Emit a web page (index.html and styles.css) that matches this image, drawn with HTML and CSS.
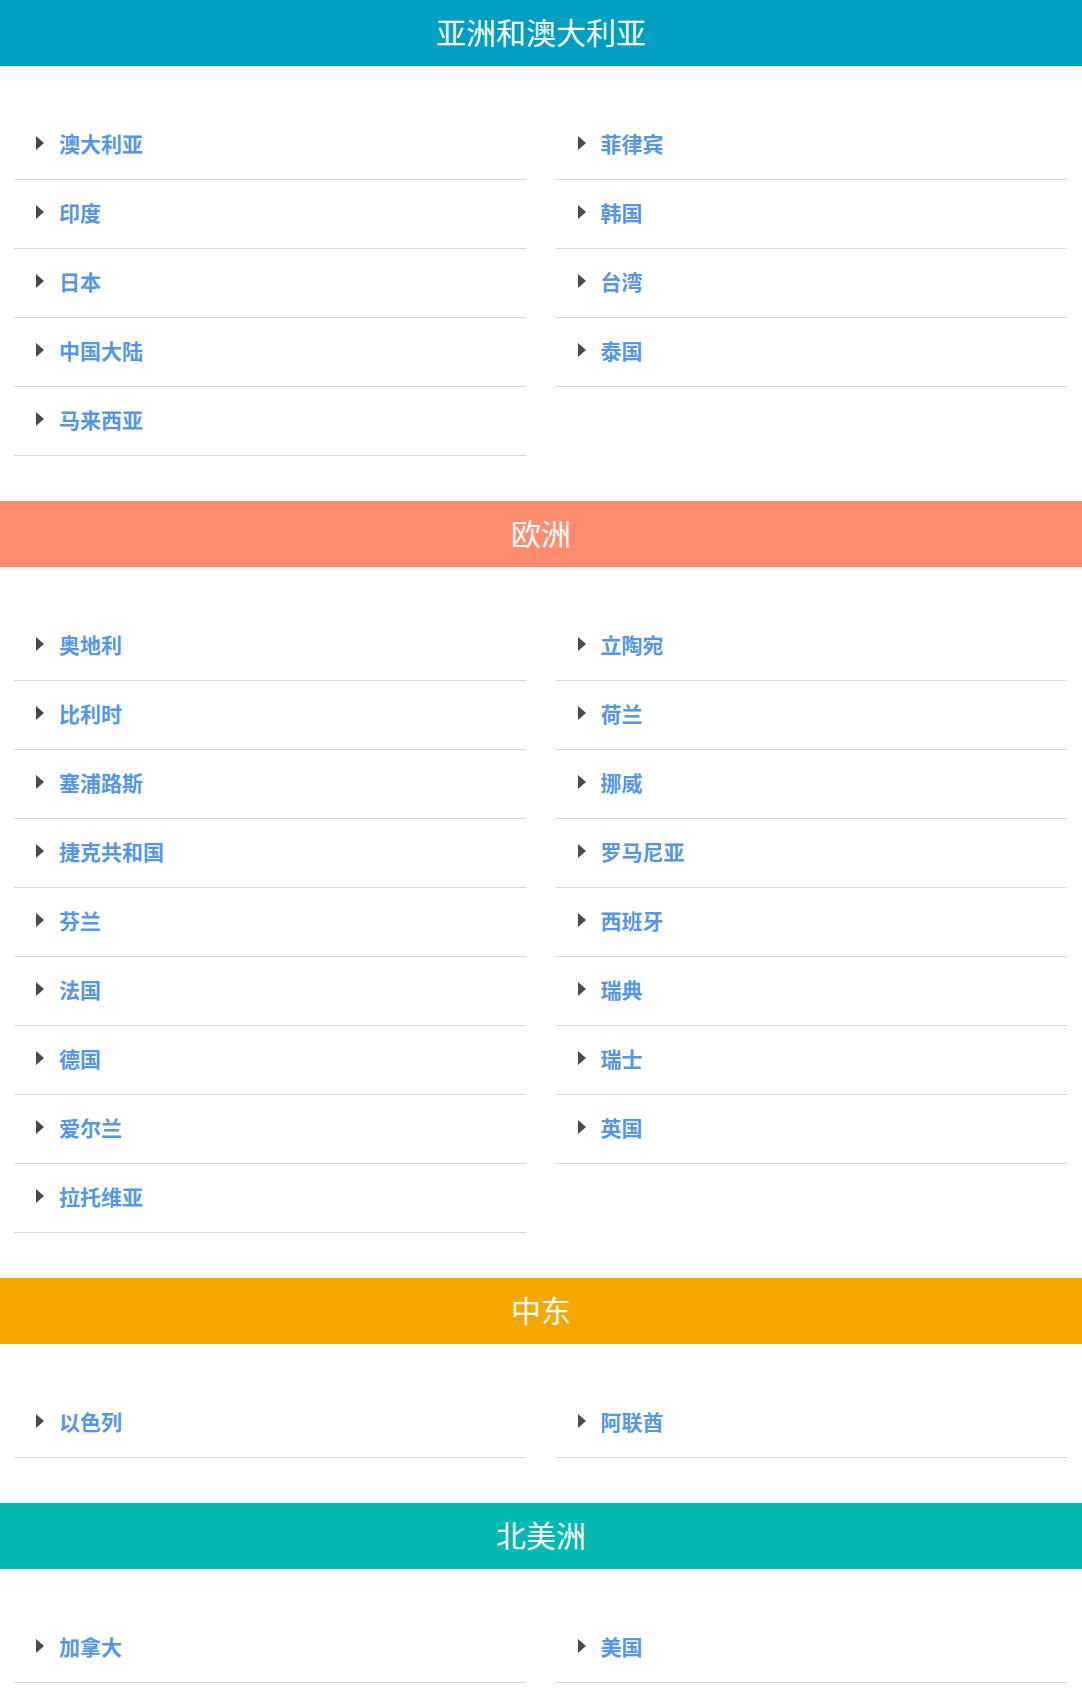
FILE: index.html
```html
<!DOCTYPE html>
<html lang="zh-CN">
<head>
    <meta charset="UTF-8">
    <meta name="viewport" content="width=device-width, initial-scale=1.0">
    <title>国家和地区</title>
    <link rel="stylesheet" href="styles.css">
</head>
<body>
    <!-- 亚洲和澳大利亚 -->
    <section class="region">
        <h2 class="region-title asia">亚洲和澳大利亚</h2>
        <ul class="country-list">
            <li><a href="#"><span class="caret"></span>澳大利亚</a></li>
            <li><a href="#"><span class="caret"></span>菲律宾</a></li>
            <li><a href="#"><span class="caret"></span>印度</a></li>
            <li><a href="#"><span class="caret"></span>韩国</a></li>
            <li><a href="#"><span class="caret"></span>日本</a></li>
            <li><a href="#"><span class="caret"></span>台湾</a></li>
            <li><a href="#"><span class="caret"></span>中国大陆</a></li>
            <li><a href="#"><span class="caret"></span>泰国</a></li>
            <li><a href="#"><span class="caret"></span>马来西亚</a></li>
        </ul>
    </section>

    <!-- 欧洲 -->
    <section class="region">
        <h2 class="region-title europe">欧洲</h2>
        <ul class="country-list">
            <li><a href="#"><span class="caret"></span>奥地利</a></li>
            <li><a href="#"><span class="caret"></span>立陶宛</a></li>
            <li><a href="#"><span class="caret"></span>比利时</a></li>
            <li><a href="#"><span class="caret"></span>荷兰</a></li>
            <li><a href="#"><span class="caret"></span>塞浦路斯</a></li>
            <li><a href="#"><span class="caret"></span>挪威</a></li>
            <li><a href="#"><span class="caret"></span>捷克共和国</a></li>
            <li><a href="#"><span class="caret"></span>罗马尼亚</a></li>
            <li><a href="#"><span class="caret"></span>芬兰</a></li>
            <li><a href="#"><span class="caret"></span>西班牙</a></li>
            <li><a href="#"><span class="caret"></span>法国</a></li>
            <li><a href="#"><span class="caret"></span>瑞典</a></li>
            <li><a href="#"><span class="caret"></span>德国</a></li>
            <li><a href="#"><span class="caret"></span>瑞士</a></li>
            <li><a href="#"><span class="caret"></span>爱尔兰</a></li>
            <li><a href="#"><span class="caret"></span>英国</a></li>
            <li><a href="#"><span class="caret"></span>拉托维亚</a></li>
        </ul>
    </section>

    <!-- 中东 -->
    <section class="region">
        <h2 class="region-title middle-east">中东</h2>
        <ul class="country-list">
            <li><a href="#"><span class="caret"></span>以色列</a></li>
            <li><a href="#"><span class="caret"></span>阿联酋</a></li>
        </ul>
    </section>

    <!-- 北美洲 -->
    <section class="region">
        <h2 class="region-title north-america">北美洲</h2>
        <ul class="country-list">
            <li><a href="#"><span class="caret"></span>加拿大</a></li>
            <li><a href="#"><span class="caret"></span>美国</a></li>
        </ul>
    </section>
</body>
</html>
```

FILE: styles.css
```css
body {
    margin: 0;
    font-family: "Noto Sans CJK SC", "Noto Sans", sans-serif;
    background-color: #fff;
}

.region-title {
    margin: 0;
    height: 62px;
    padding-bottom: 4px;
    line-height: 62px;
    text-align: center;
    color: #fff;
    font-size: 30px;
    font-weight: normal;
}

.asia {
    background-color: #009fc2;
}

.europe {
    background-color: #ff8c6c;
}

.middle-east {
    background-color: #f5a700;
}

.north-america {
    background-color: #00b9b2;
}

.country-list {
    list-style: none;
    margin: 0;
    padding: 45px 15px 45px 14px;
    display: grid;
    grid-template-columns: 1fr 1fr;
    column-gap: 30px;
}

.country-list li {
    height: 68px;
    border-bottom: 1px solid #d6d6d6;
}

.country-list a {
    display: flex;
    align-items: center;
    box-sizing: border-box;
    height: 100%;
    padding: 0 0 4px 22px;
    color: #5596e6;
    font-size: 21px;
    font-weight: bold;
    text-decoration: none;
}

.caret {
    width: 0;
    height: 0;
    margin-right: 15px;
    border-top: 7px solid transparent;
    border-bottom: 7px solid transparent;
    border-left: 8px solid #4a4a4a;
}
```
